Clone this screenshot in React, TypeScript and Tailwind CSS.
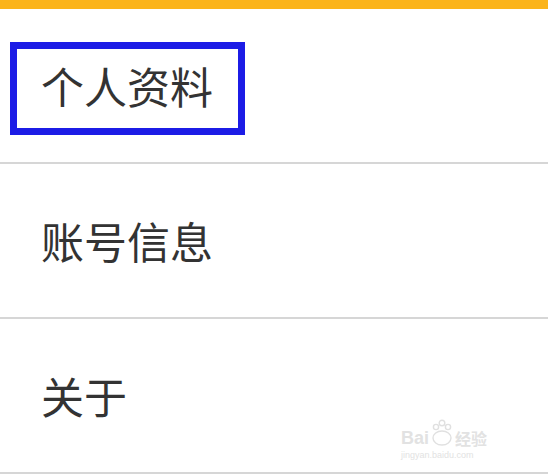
const font = { fontFamily: '"Noto Sans CJK SC", "Noto Sans", sans-serif' }

function Row({ label, boxed }: { label: string; boxed?: boolean }) {
  return (
    <div className="relative flex h-[155px] items-center border-b-2 border-[#d6d6d6] pl-[41px]">
      <span className="text-[43px] leading-none text-[#333333]">{label}</span>
      {boxed && (
        <div className="absolute left-[10px] top-[33px] h-[93px] w-[235px] border-[7px] border-[#1c1ce6]" />
      )}
    </div>
  )
}

export default function App() {
  return (
    <div className="relative h-[476px] w-[548px] overflow-hidden bg-white" style={font}>
      {/* Top accent */}
      <div className="h-[9px] bg-[#fbb41b]" />

      <Row label="个人资料" boxed />
      <Row label="账号信息" />
      <Row label="关于" />

      {/* Watermark */}
      <div className="absolute left-[401px] top-[417px] flex flex-col gap-[3px] text-[#e2e2e2]">
        <div className="flex h-[30px] items-end gap-[1px]">
          <span className="text-[18px] leading-[18px] font-bold" style={{ fontFamily: '"Liberation Sans", sans-serif' }}>Bai</span>
          <svg width="24" height="28" viewBox="0 0 24 28" fill="none" stroke="#e0e0e0" strokeWidth="1.4">
            <circle cx="6" cy="8" r="2.6" />
            <circle cx="12" cy="4" r="2.8" />
            <circle cx="18" cy="8" r="2.6" />
            <ellipse cx="12" cy="19" rx="9" ry="7" />
          </svg>
          <span className="text-[16px] leading-[18px] font-bold">经验</span>
        </div>
        <span className="text-[9px] leading-[10px]" style={{ fontFamily: '"Liberation Sans", sans-serif' }}>
          jingyan.baidu.com
        </span>
      </div>
    </div>
  )
}
